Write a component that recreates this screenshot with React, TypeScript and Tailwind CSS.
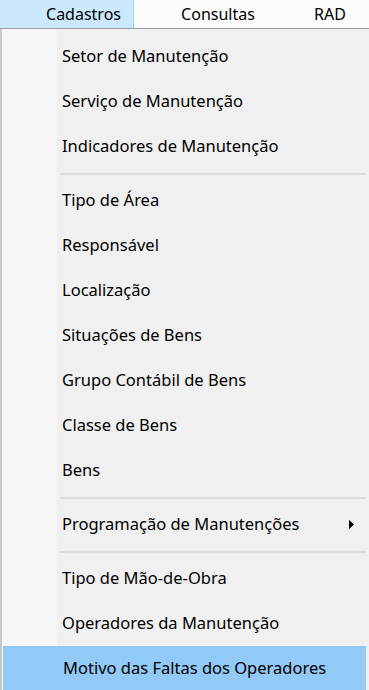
import React from 'react';

type Item = { label: string; sub?: boolean; active?: boolean } | 'sep';

const items: Item[] = [
  { label: 'Setor de Manutenção' },
  { label: 'Serviço de Manutenção' },
  { label: 'Indicadores de Manutenção' },
  'sep',
  { label: 'Tipo de Área' },
  { label: 'Responsável' },
  { label: 'Localização' },
  { label: 'Situações de Bens' },
  { label: 'Grupo Contábil de Bens' },
  { label: 'Classe de Bens' },
  { label: 'Bens' },
  'sep',
  { label: 'Programação de Manutenções', sub: true },
  'sep',
  { label: 'Tipo de Mão-de-Obra' },
  { label: 'Operadores da Manutenção' },
  { label: 'Motivo das Faltas dos Operadores', active: true },
];

export default function App() {
  return (
    <div
      className="w-[369px] h-[690px] overflow-hidden bg-[#f0f0f0] text-[#000] flex flex-col"
      style={{ fontFamily: '"Noto Sans", "Open Sans", sans-serif' }}
    >
      {/* menu bar */}
      <div className="h-[29px] shrink-0 flex items-stretch bg-[#fbfbfb] border-b border-[#a0a0a0] text-[16px]">
        <div className="w-[134px] flex items-center justify-end pr-[12px] bg-[#cce8ff] border-r border-[#99d1ff]">
          Cadastros
        </div>
        <div className="w-[168px] flex items-center justify-center">Consultas</div>
        <div className="flex-1 flex items-center pl-[12px]">RAD</div>
      </div>

      {/* dropdown */}
      <div className="flex-1 flex flex-col pt-[5px] border-l-[2px] border-[#c8c8c8] bg-[linear-gradient(to_right,#f6f6f6_55px,#f0f0f0_55px)]">
        {items.map((it, i) =>
          it === 'sep' ? (
            <div key={i} className="h-[9px] shrink-0 flex items-center pl-[58px] pr-[3px]">
              <div className="h-[2px] w-full bg-[#dcdcdc]" />
            </div>
          ) : (
            <div
              key={i}
              className={`h-[45px] shrink-0 flex items-center pl-[60px] pr-[12px] text-[16.5px] mr-[3px] ${
                it.active ? 'bg-[#91c9f7] ml-[1px] pl-[59px]' : ''
              }`}
            >
              <span className="flex-1">{it.label}</span>
              {it.sub && (
                <svg width="5" height="9" viewBox="0 0 5 9">
                  <path d="M0 0 L5 4.5 L0 9 Z" fill="#000" />
                </svg>
              )}
            </div>
          )
        )}
      </div>
    </div>
  );
}
